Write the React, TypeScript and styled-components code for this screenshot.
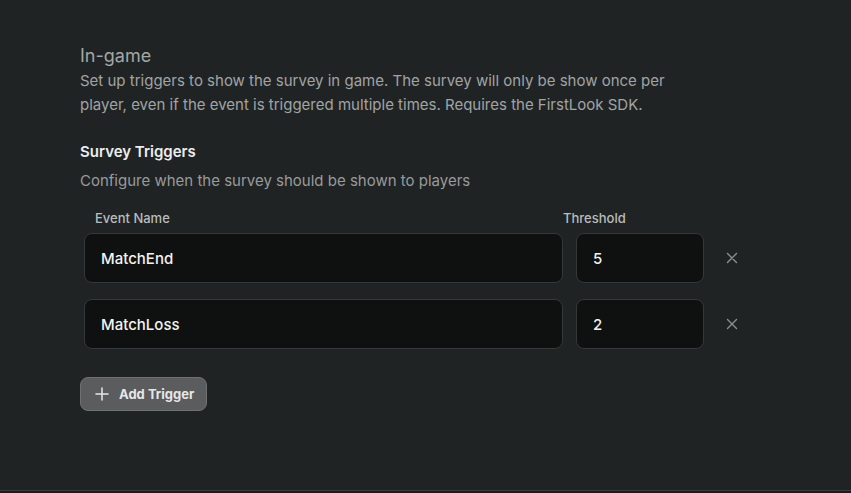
import styled, { createGlobalStyle } from 'styled-components';

const GlobalStyle = createGlobalStyle`
  html, body {
    margin: 0;
    padding: 0;
    background: #202324;
  }
  body {
    font-family: Inter, "Open Sans", sans-serif;
    -webkit-font-smoothing: antialiased;
  }
`;

const triggers = [
  { id: 1, name: 'MatchEnd', threshold: 5 },
  { id: 2, name: 'MatchLoss', threshold: 2 },
];

const App = () => {
  return (
    <>
      <GlobalStyle />
      <Page>
        <Section>
          <Title>In-game</Title>
          <Lead>
            Set up triggers to show the survey in game. The survey will only be show once per
            <br />
            player, even if the event is triggered multiple times. Requires the FirstLook SDK.
          </Lead>

          <SubTitle>Survey Triggers</SubTitle>
          <SubLead>Configure when the survey should be shown to players</SubLead>

          <Table>
            <HeaderRow>
              <Label>Event Name</Label>
              <Label>Threshold</Label>
            </HeaderRow>
            {triggers.map(t => (
              <Row key={t.id}>
                <Field>{t.name}</Field>
                <Field>{t.threshold}</Field>
                <RemoveButton aria-label="Remove trigger">
                  <svg width="12" height="12" viewBox="0 0 12 12" fill="none">
                    <path d="M1.5 1.5l9 9M10.5 1.5l-9 9" stroke="currentColor" strokeWidth="1.4" strokeLinecap="round" />
                  </svg>
                </RemoveButton>
              </Row>
            ))}
          </Table>

          <AddButton>
            <svg width="14" height="14" viewBox="0 0 14 14" fill="none">
              <path d="M7 1v12M1 7h12" stroke="currentColor" strokeWidth="1.5" strokeLinecap="round" />
            </svg>
            Add Trigger
          </AddButton>
        </Section>
        <Footer />
      </Page>
    </>
  );
};

const Page = styled.div`
  width: 851px;
  height: 493px;
  display: flex;
  flex-direction: column;
  justify-content: space-between;
  overflow: hidden;
`;

const Section = styled.div`
  padding: 44px 0 0 80px;
  display: flex;
  flex-direction: column;
  align-items: flex-start;
`;

const Title = styled.h2`
  margin: 0;
  font-size: 18px;
  font-weight: 400;
  line-height: 24px;
  color: #a3a8a6;
`;

const Lead = styled.p`
  margin: 1px 0 0;
  font-size: 15px;
  line-height: 24px;
  color: #a0a4a5;
  white-space: nowrap;
`;

const SubTitle = styled.h3`
  margin: 24px 0 0;
  font-size: 15px;
  font-weight: 600;
  line-height: 22px;
  color: #eceeee;
`;

const SubLead = styled.p`
  margin: 7px 0 0;
  font-size: 15px;
  line-height: 22px;
  color: #979b9c;
`;

const Table = styled.div`
  margin-top: 18px;
  padding-left: 4px;
  display: flex;
  flex-direction: column;
  gap: 16px;
`;

const HeaderRow = styled.div`
  display: grid;
  grid-template-columns: 479px 128px;
  column-gap: 13px;
  margin-bottom: -9px;
`;

const Label = styled.span`
  padding-left: 11px;
  font-size: 13px;
  font-weight: 500;
  line-height: 16px;
  color: #b9bcbc;

  & + & {
    padding-left: 0;
    margin-left: -13px;
  }
`;

const Row = styled.div`
  display: grid;
  grid-template-columns: 479px 128px 56px;
  column-gap: 13px;
  align-items: center;
`;

const Field = styled.div`
  box-sizing: border-box;
  height: 50px;
  padding: 0 16px;
  display: flex;
  align-items: center;
  background: #0f1010;
  border: 1px solid #34383a;
  border-radius: 8px;
  font-size: 15px;
  font-weight: 500;
  color: #f2f2f2;
`;

const RemoveButton = styled.button`
  justify-self: start;
  margin-left: 3px;
  width: 24px;
  height: 24px;
  padding: 0;
  display: flex;
  align-items: center;
  justify-content: center;
  background: none;
  border: none;
  color: #8b8f90;
  cursor: pointer;
`;

const AddButton = styled.button`
  margin-top: 28px;
  box-sizing: border-box;
  height: 34px;
  padding: 0 12px 0 14px;
  display: flex;
  align-items: center;
  gap: 10px;
  background: #5a5c5d;
  border: 1px solid #6e7172;
  border-radius: 8px;
  font-family: Inter, "Open Sans", sans-serif;
  font-size: 13px;
  font-weight: 700;
  color: #e6e7e7;
  cursor: pointer;
`;

const Footer = styled.div`
  height: 2px;
  border-top: 1px solid #3a3e40;
  background: #1a1c1d;
`;

export default App;
